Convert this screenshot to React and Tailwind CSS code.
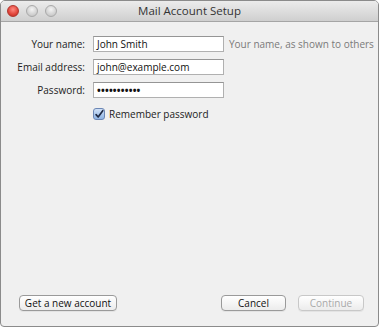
import React from "react";

const font = { fontFamily: '"Open Sans", "Noto Sans", sans-serif' };

function Field({ label, value, type = "text", hint }) {
  return (
    <div className="flex items-center h-[16px]">
      <div className="w-[84px] shrink-0 text-right text-[10px] text-[#222] whitespace-nowrap">{label}</div>
      <div className="ml-[8px] shrink-0 w-[131px] h-[16px] bg-white border border-[#b0b0b0] border-t-[#959595] flex items-center px-[3px] text-[10px] text-[#111] leading-none whitespace-nowrap">
        {type === "password" ? (
          <span className="tracking-[0.2px] text-[10px] font-bold">•••••••••••</span>
        ) : (
          value
        )}
      </div>
      {hint && <div className="ml-[5px] text-[10px] text-[#7a7a7a] whitespace-nowrap">{hint}</div>}
    </div>
  );
}

function Btn({ children, w, disabled }) {
  return (
    <div
      className={`h-[16px] rounded-[4px] border bg-gradient-to-b from-white to-[#ececec] flex items-center justify-center text-[10px] whitespace-nowrap shadow-[0_1px_0_rgba(0,0,0,0.05)] ${disabled ? "text-[#a9a9a9] border-[#c8c8c8]" : "text-[#111] border-[#9a9a9a]"}`}
      style={{ width: w }}
    >
      {children}
    </div>
  );
}

export default function App() {
  return (
    <div className="w-[382px] h-[328px] bg-white" style={font}>
      <div className="w-[379px] h-[327px] border border-[#8b8b8b] rounded-t-[5px] rounded-b-[4px] overflow-hidden flex flex-col bg-[#f0f0f0]">
        <div className="h-[21px] shrink-0 bg-gradient-to-b from-[#ececec] to-[#cfcfcf] border-b border-[#a5a5a5] relative flex items-center justify-center">
          <div className="absolute left-[6px] top-[4px] flex gap-[7px]">
            <div className="w-[12px] h-[12px] rounded-full bg-[radial-gradient(circle_at_50%_35%,#ff8a80,#e0443a_60%,#b52a22)] border border-[#b0352c]" />
            <div className="w-[12px] h-[12px] rounded-full bg-[radial-gradient(circle_at_50%_35%,#f4f4f4,#d2d2d2_60%,#bdbdbd)] border border-[#a9a9a9]" />
            <div className="w-[12px] h-[12px] rounded-full bg-[radial-gradient(circle_at_50%_35%,#f4f4f4,#d2d2d2_60%,#bdbdbd)] border border-[#a9a9a9]" />
          </div>
          <div className="text-[11.5px] text-[#333]">Mail Account Setup</div>
        </div>
        <div className="flex-1 flex flex-col">
          <div className="pt-[14px] flex flex-col gap-[7px]">
            <Field label="Your name:" value="John Smith" hint="Your name, as shown to others" />
            <Field label="Email address:" value="john@example.com" />
            <Field label="Password:" type="password" />
            <div className="flex items-center ml-[92px] mt-[1px] h-[16px]">
              <div className="w-[12px] h-[12px] rounded-[3px] border border-[#6b86b5] bg-gradient-to-b from-[#cfe0f6] to-[#8fb4e4] flex items-center justify-center">
                <svg width="11" height="11" viewBox="0 0 12 12">
                  <path d="M2.5 6.2 L5 9 L10.5 1.5" fill="none" stroke="#1f2a44" strokeWidth="2" strokeLinecap="round" strokeLinejoin="round" />
                </svg>
              </div>
              <span className="ml-[4px] text-[10px] text-[#222]">Remember password</span>
            </div>
          </div>
          <div className="mt-auto mb-[15px] flex items-center pl-[18px]">
            <Btn w="98px">Get a new account</Btn>
            <div className="ml-auto flex gap-[12px]">
              <Btn w="65px">Cancel</Btn>
              <Btn w="66px" disabled>Continue</Btn>
            </div>
            <div className="w-[14px]" />
          </div>
        </div>
      </div>
    </div>
  );
}
